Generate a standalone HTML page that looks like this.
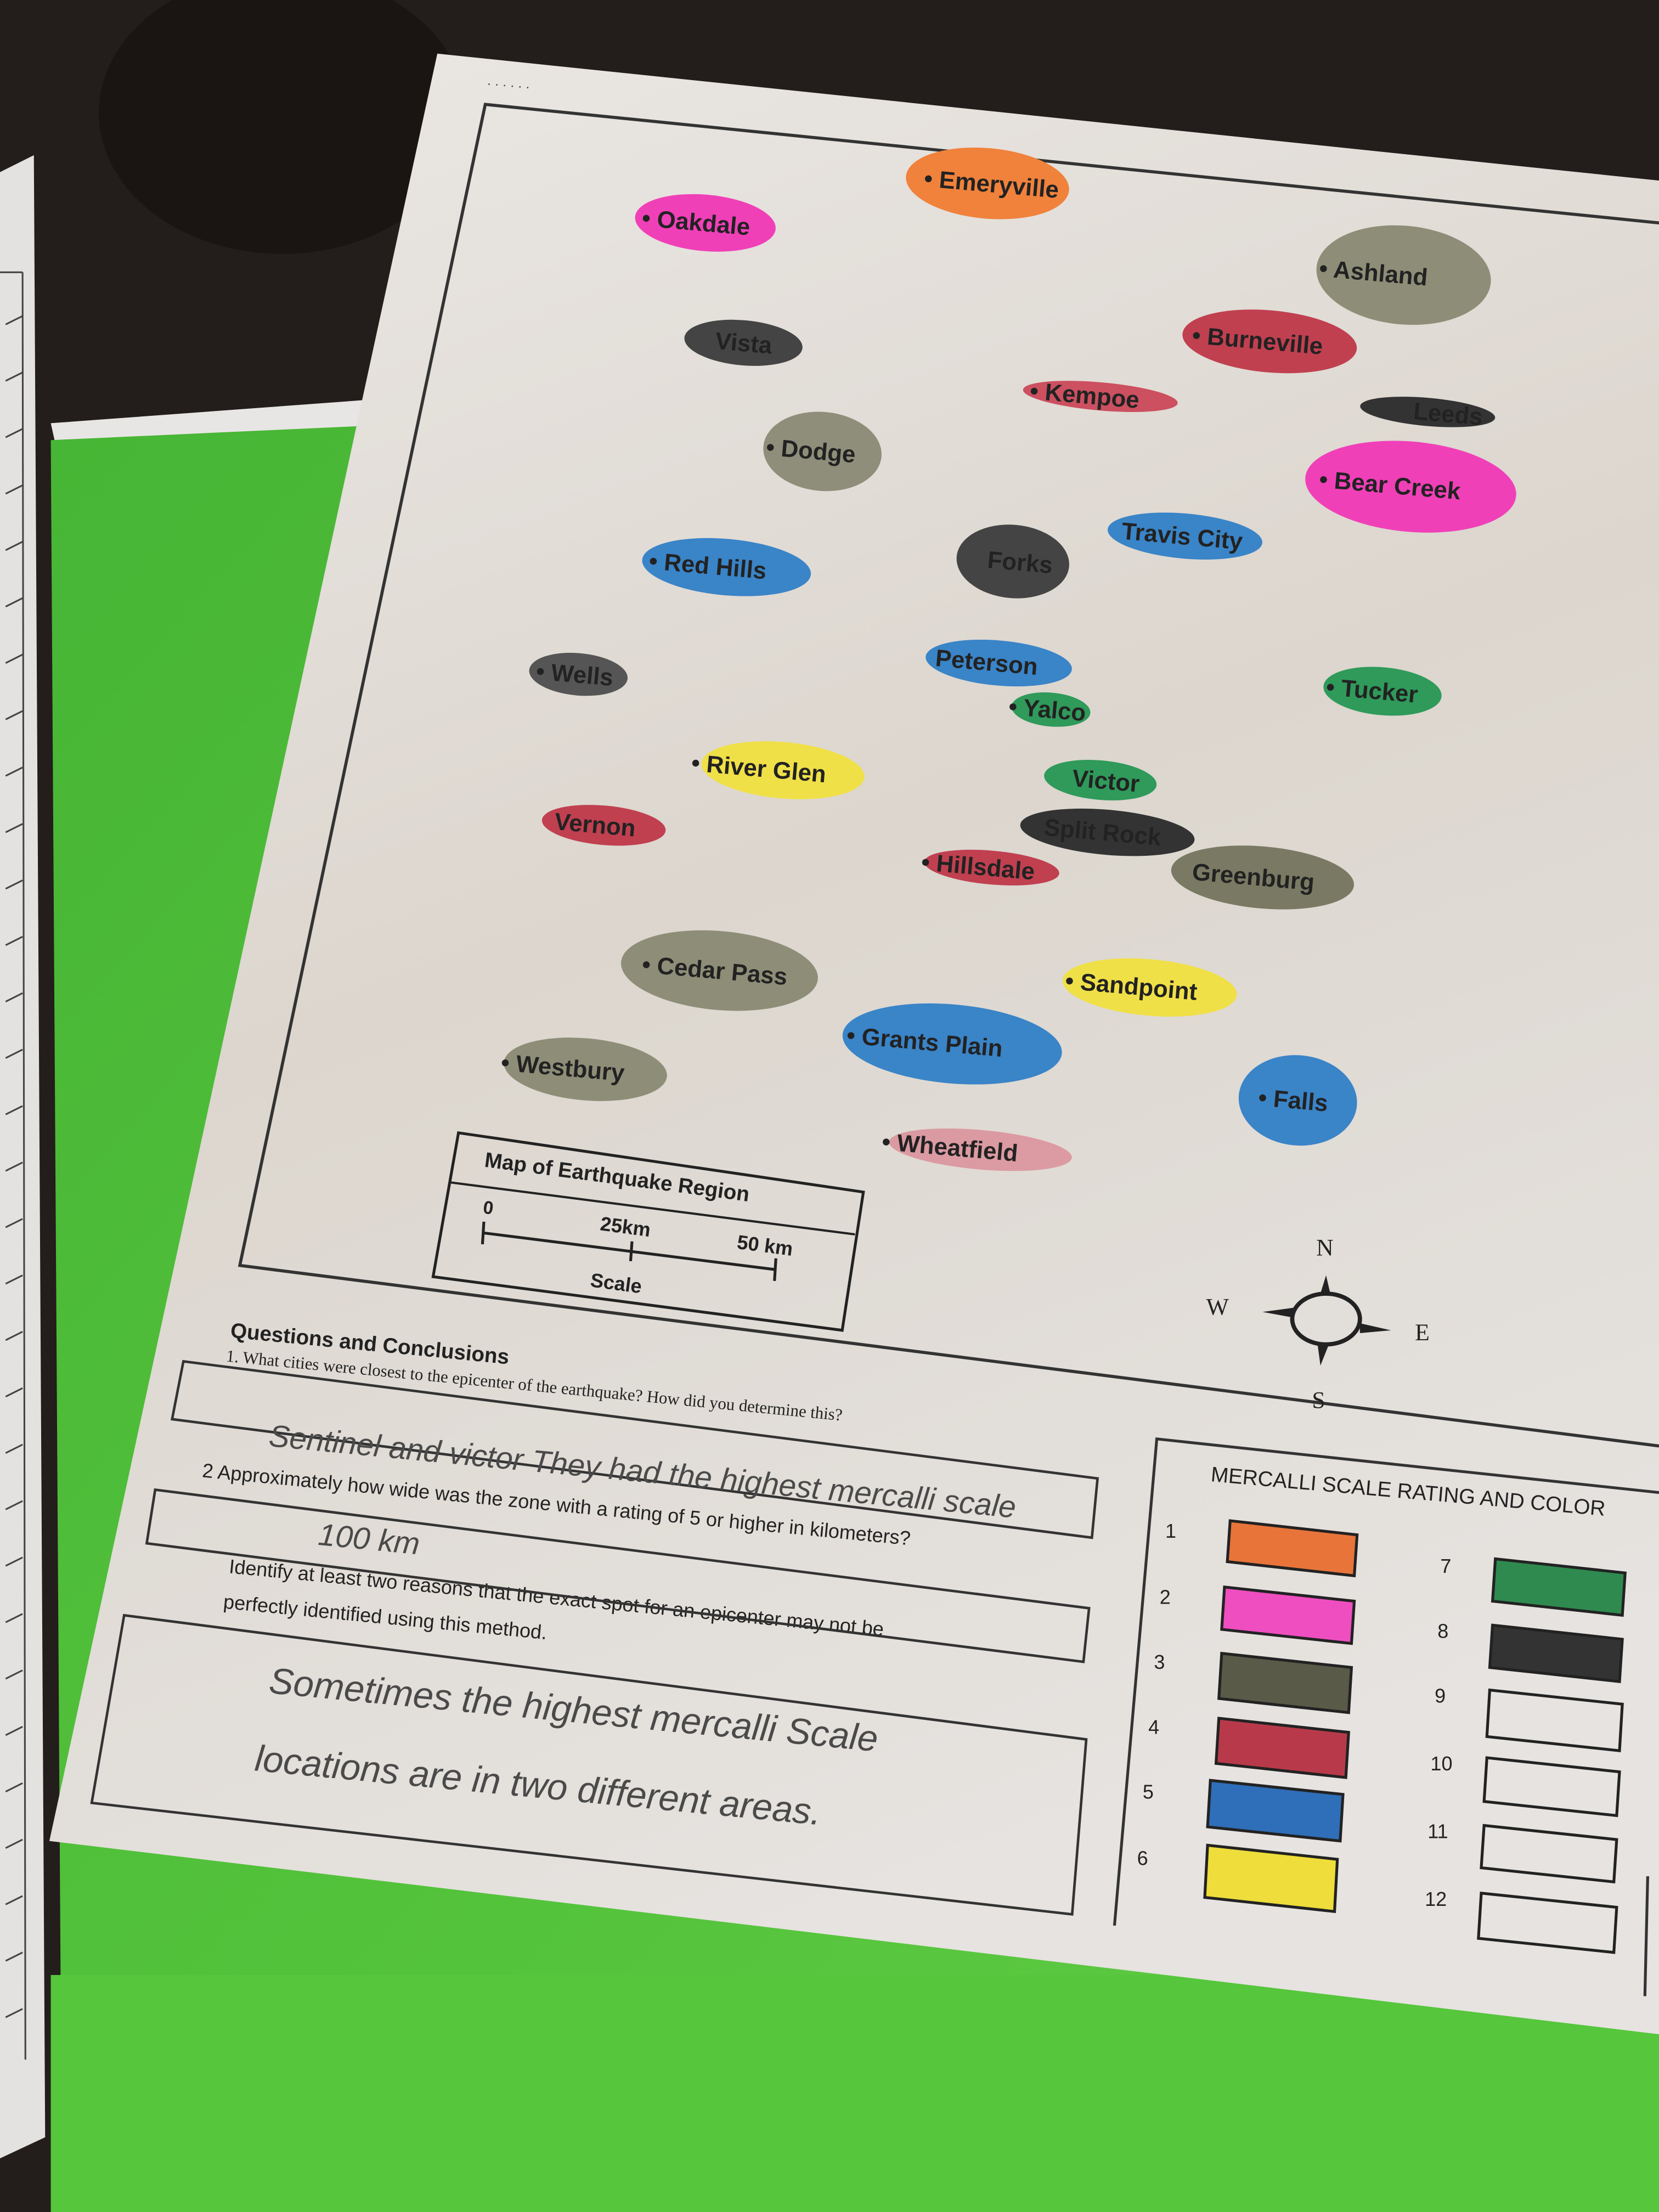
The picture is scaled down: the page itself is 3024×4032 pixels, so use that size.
<!DOCTYPE html>
<html><head><meta charset="utf-8"><style>html,body{margin:0;padding:0;background:#231d1b}svg{display:block}</style></head>
<body>
<svg xmlns="http://www.w3.org/2000/svg" width="3024" height="4032" viewBox="0 0 1176 1568" font-family="Liberation Sans, sans-serif">
<defs>
<linearGradient id="pg" x1="0" y1="0" x2="0.3" y2="1">
<stop offset="0" stop-color="#ebe8e5"/><stop offset="0.5" stop-color="#dcd6ce"/><stop offset="1" stop-color="#e6e3e0"/>
</linearGradient>
<linearGradient id="gg" x1="0" y1="0" x2="1" y2="1">
<stop offset="0" stop-color="#47b535"/><stop offset="0.6" stop-color="#55c43c"/><stop offset="1" stop-color="#63cc46"/>
</linearGradient>
</defs>
<rect width="1176" height="1568" fill="#231d1b"/>
<ellipse cx="200" cy="80" rx="130" ry="100" fill="#1a1513"/>
<!-- left paper strip -->
<polygon points="0,122 24,110 32,1515 0,1530" fill="#e4e2e0"/>
<g stroke="#444" stroke-width="1.2">
<line x1="0" y1="193" x2="16" y2="193"/><line x1="16" y1="193" x2="18" y2="1460"/>
<line x1="4" y1="230" x2="16" y2="224"/><line x1="4" y1="270" x2="16" y2="264"/><line x1="4" y1="310" x2="16" y2="304"/><line x1="4" y1="350" x2="16" y2="344"/><line x1="4" y1="390" x2="16" y2="384"/><line x1="4" y1="430" x2="16" y2="424"/><line x1="4" y1="470" x2="16" y2="464"/><line x1="4" y1="510" x2="16" y2="504"/><line x1="4" y1="550" x2="16" y2="544"/><line x1="4" y1="590" x2="16" y2="584"/><line x1="4" y1="630" x2="16" y2="624"/><line x1="4" y1="670" x2="16" y2="664"/><line x1="4" y1="710" x2="16" y2="704"/><line x1="4" y1="750" x2="16" y2="744"/><line x1="4" y1="790" x2="16" y2="784"/><line x1="4" y1="830" x2="16" y2="824"/><line x1="4" y1="870" x2="16" y2="864"/><line x1="4" y1="910" x2="16" y2="904"/><line x1="4" y1="950" x2="16" y2="944"/><line x1="4" y1="990" x2="16" y2="984"/><line x1="4" y1="1030" x2="16" y2="1024"/><line x1="4" y1="1070" x2="16" y2="1064"/><line x1="4" y1="1110" x2="16" y2="1104"/><line x1="4" y1="1150" x2="16" y2="1144"/><line x1="4" y1="1190" x2="16" y2="1184"/><line x1="4" y1="1230" x2="16" y2="1224"/><line x1="4" y1="1270" x2="16" y2="1264"/><line x1="4" y1="1310" x2="16" y2="1304"/><line x1="4" y1="1350" x2="16" y2="1344"/><line x1="4" y1="1390" x2="16" y2="1384"/><line x1="4" y1="1430" x2="16" y2="1424"/>
</g>
<polygon points="36,300 280,282 300,300 40,318" fill="#e8e6e4"/>
<polygon points="36,312 300,300 1176,300 1176,1568 44,1568" fill="url(#gg)"/>
<rect x="36" y="1400" width="1140" height="168" fill="#56c63c"/>
<!-- main paper -->
<polygon points="310,38 1176,128 1176,1442 35,1305" fill="url(#pg)"/>
<text x="345" y="62" font-size="9" fill="#333" transform="rotate(5 345 62)">· · · · · ·</text>
<polyline points="1176,158 344,74 170,897 1176,1025" fill="none" stroke="#333" stroke-width="2.2"/>

<g font-size="17" font-weight="bold" fill="#222">
<g transform="translate(700,130) rotate(5)"><ellipse rx="58" ry="25" fill="#f0823c"/><text x="-45" y="6">• Emeryville</text></g>
<g transform="translate(500,158) rotate(5)"><ellipse rx="50" ry="20" fill="#f040b8"/><text x="-45" y="6">• Oakdale</text></g>
<g transform="translate(995,195) rotate(5)"><ellipse rx="62" ry="35" fill="#8e8e78"/><text x="-60" y="6">• Ashland</text></g>
<g transform="translate(527,243) rotate(5)"><ellipse rx="42" ry="16" fill="#444"/><text x="-20" y="6">Vista</text></g>
<g transform="translate(900,242) rotate(5)"><ellipse rx="62" ry="22" fill="#c04050"/><text x="-55" y="6">• Burneville</text></g>
<g transform="translate(780,281) rotate(5)"><ellipse rx="55" ry="10" fill="#cc5060"/><text x="-50" y="6">• Kempoe</text></g>
<g transform="translate(1012,292) rotate(5)"><ellipse rx="48" ry="10" fill="#333"/><text x="-10" y="6">Leeds</text></g>
<g transform="translate(583,320) rotate(5)"><ellipse rx="42" ry="28" fill="#8e8e7a"/><text x="-40" y="6">• Dodge</text></g>
<g transform="translate(1000,345) rotate(5)"><ellipse rx="75" ry="32" fill="#f040b8"/><text x="-65" y="6">• Bear Creek</text></g>
<g transform="translate(840,380) rotate(5)"><ellipse rx="55" ry="16" fill="#3a84c8"/><text x="-45" y="6">Travis City</text></g>
<g transform="translate(515,402) rotate(5)"><ellipse rx="60" ry="20" fill="#3a84c8"/><text x="-55" y="6">• Red Hills</text></g>
<g transform="translate(718,398) rotate(5)"><ellipse rx="40" ry="26" fill="#444"/><text x="-18" y="6">Forks</text></g>
<g transform="translate(708,470) rotate(5)"><ellipse rx="52" ry="16" fill="#3a84c8"/><text x="-45" y="6">Peterson</text></g>
<g transform="translate(410,478) rotate(5)"><ellipse rx="35" ry="15" fill="#555"/><text x="-30" y="6">• Wells</text></g>
<g transform="translate(980,490) rotate(5)"><ellipse rx="42" ry="17" fill="#2f9a5a"/><text x="-40" y="6">• Tucker</text></g>
<g transform="translate(745,503) rotate(5)"><ellipse rx="28" ry="12" fill="#2f9a5a"/><text x="-30" y="6">• Yalco</text></g>
<g transform="translate(555,546) rotate(5)"><ellipse rx="58" ry="20" fill="#f0e048"/><text x="-65" y="6">• River Glen</text></g>
<g transform="translate(780,553) rotate(5)"><ellipse rx="40" ry="14" fill="#2f9a5a"/><text x="-20" y="6">Victor</text></g>
<g transform="translate(428,585) rotate(5)"><ellipse rx="44" ry="14" fill="#c04050"/><text x="-35" y="6">Vernon</text></g>
<g transform="translate(785,590) rotate(5)"><ellipse rx="62" ry="16" fill="#333"/><text x="-45" y="6">Split Rock</text></g>
<g transform="translate(703,615) rotate(5)"><ellipse rx="48" ry="12" fill="#c04050"/><text x="-50" y="6">• Hillsdale</text></g>
<g transform="translate(895,622) rotate(5)"><ellipse rx="65" ry="22" fill="#7a7a64"/><text x="-50" y="6">Greenburg</text></g>
<g transform="translate(510,688) rotate(5)"><ellipse rx="70" ry="28" fill="#8e8e78"/><text x="-55" y="6">• Cedar Pass</text></g>
<g transform="translate(815,700) rotate(5)"><ellipse rx="62" ry="20" fill="#f0e048"/><text x="-60" y="6">• Sandpoint</text></g>
<g transform="translate(675,740) rotate(5)"><ellipse rx="78" ry="28" fill="#3a84c8"/><text x="-75" y="6">• Grants Plain</text></g>
<g transform="translate(415,758) rotate(5)"><ellipse rx="58" ry="22" fill="#8e8e78"/><text x="-60" y="6">• Westbury</text></g>
<g transform="translate(920,780) rotate(5)"><ellipse rx="42" ry="32" fill="#3a84c8"/><text x="-28" y="6">• Falls</text></g>
<g transform="translate(695,815) rotate(5)"><ellipse rx="65" ry="14" fill="#d87080" opacity="0.6"/><text x="-70" y="6">• Wheatfield</text></g>
</g>

<polygon points="325,803 612,845 597,943 307,905" fill="none" stroke="#222" stroke-width="2"/>
<line x1="318" y1="838" x2="606" y2="875" stroke="#222" stroke-width="1.6"/>
<g fill="#222" font-weight="bold">
<text x="343" y="827" font-size="15" transform="rotate(7.5 343 827)">Map of Earthquake Region</text>
<text x="342" y="860" font-size="13" transform="rotate(7.5 342 860)">0</text>
<text x="425" y="872" font-size="14" transform="rotate(7.5 425 872)">25km</text>
<text x="522" y="885" font-size="14" transform="rotate(7.5 522 885)">50 km</text>
<text x="418" y="912" font-size="14" transform="rotate(7.5 418 912)">Scale</text>
</g>
<line x1="343" y1="874" x2="550" y2="900" stroke="#222" stroke-width="2"/>
<line x1="343" y1="866" x2="342" y2="882" stroke="#222" stroke-width="2"/>
<line x1="448" y1="880" x2="447" y2="894" stroke="#222" stroke-width="2"/>
<line x1="550" y1="892" x2="549" y2="908" stroke="#222" stroke-width="2"/>

<g fill="#222" font-family="Liberation Serif, serif" font-size="17">
<text x="933" y="890">N</text><text x="855" y="932">W</text><text x="1003" y="950">E</text><text x="930" y="998">S</text>
</g>
<ellipse cx="940" cy="935" rx="24" ry="18" fill="none" stroke="#222" stroke-width="3"/>
<path d="M940 904 L943 917 L936 917 Z M895 930 L917 927 L917 934 Z M986 943 L964 938 L964 945 Z M936 968 L934 953 L942 953 Z" fill="#222"/>

<g fill="#222">
<text x="163" y="948" font-size="15" font-weight="bold" transform="rotate(5.5 163 948)">Questions and Conclusions</text>
<text x="160" y="965" font-size="12" font-family="Liberation Serif, serif" transform="rotate(5.5 160 965)">1.  What cities were closest to the epicenter of the earthquake? How did you determine this?</text>
<text x="143" y="1047" font-size="14" transform="rotate(5.5 143 1047)">2   Approximately how wide was the zone with a rating of 5 or higher in kilometers?</text>
<text x="162" y="1115" font-size="14" transform="rotate(5.5 162 1115)">Identify at least two reasons that the exact spot for an epicenter may not be</text>
<text x="158" y="1140" font-size="14" transform="rotate(5.5 158 1140)">perfectly identified using this method.</text>
</g>
<g fill="none" stroke="#333" stroke-width="1.8">
<polygon points="130,965 778,1048 774,1090 122,1006"/>
<polygon points="110,1056 772,1140 768,1178 104,1094"/>
<polygon points="88,1145 770,1233 760,1357 65,1278"/>
</g>
<g fill="#4a4a4a" font-style="italic" font-size="22">
<text x="190" y="1025" transform="rotate(5.5 190 1025)">Sentinel and victor  They had the highest mercalli scale</text>
<text x="225" y="1095" transform="rotate(5.5 225 1095)">100 km</text>
<text x="190" y="1200" font-size="26" transform="rotate(5.5 190 1200)">Sometimes  the  highest mercalli  Scale</text>
<text x="180" y="1255" font-size="26" transform="rotate(5.5 180 1255)">locations  are in  two different  areas.</text>
</g>

<polyline points="790,1365 820,1020 1176,1058" fill="none" stroke="#333" stroke-width="2"/>
<line x1="1168" y1="1330" x2="1166" y2="1415" stroke="#333" stroke-width="2"/>
<text x="858" y="1050" font-size="15" fill="#222" transform="rotate(5 858 1050)">MERCALLI SCALE RATING AND COLOR</text>
<g font-size="14" fill="#222">
<text x="826" y="1090">1</text><text x="822" y="1137">2</text><text x="818" y="1183">3</text><text x="814" y="1229">4</text><text x="810" y="1275">5</text><text x="806" y="1322">6</text>
<text x="1021" y="1115">7</text><text x="1019" y="1161">8</text><text x="1017" y="1207">9</text><text x="1014" y="1255">10</text><text x="1012" y="1303">11</text><text x="1010" y="1351">12</text>
</g>
<g stroke="#222" stroke-width="2">
<polygon points="872,1078 962,1088 960,1117 870,1107" fill="#e8743a"/>
<polygon points="868,1125 960,1135 958,1165 866,1155" fill="#ee4ec0"/>
<polygon points="866,1172 958,1182 956,1214 864,1204" fill="#5a5a48"/>
<polygon points="864,1218 956,1228 954,1260 862,1250" fill="#b83a4a"/>
<polygon points="858,1262 952,1272 950,1305 856,1295" fill="#2f6eb8"/>
<polygon points="856,1308 948,1318 946,1355 854,1345" fill="#eedd3a"/>
<polygon points="1060,1105 1152,1115 1150,1145 1058,1135" fill="#2f8a50"/>
<polygon points="1058,1152 1150,1162 1148,1192 1056,1182" fill="#333"/>
<polygon points="1056,1198 1150,1208 1148,1241 1054,1231" fill="none"/>
<polygon points="1054,1246 1148,1256 1146,1287 1052,1277" fill="none"/>
<polygon points="1052,1294 1146,1304 1144,1334 1050,1324" fill="none"/>
<polygon points="1050,1342 1146,1352 1144,1384 1048,1374" fill="none"/>
</g>
</svg>
</body></html>
